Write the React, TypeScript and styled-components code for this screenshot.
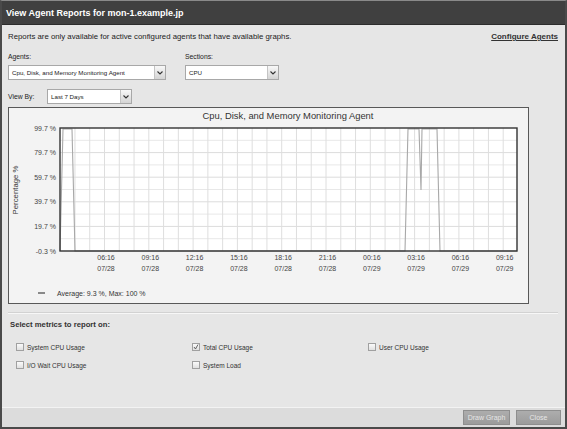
import styled, { createGlobalStyle } from "styled-components"

const GlobalStyle = createGlobalStyle`
  html, body {
    margin: 0;
    padding: 0;
    background: #e6e6e6;
  }
  body {
    font-family: "Liberation Sans", Arial, sans-serif;
  }
`

const Dialog = styled.div`
  width: 567px;
  height: 429px;
  box-sizing: border-box;
  border: 2px solid #4a4a4a;
  border-top: 1px solid #8a8a8a;
  display: flex;
  flex-direction: column;
  background: #e6e6e6;
  color: #222;
`

const TitleBar = styled.div`
  height: 23px;
  flex-shrink: 0;
  background: #404040;
  border-bottom: 1px solid #2c2c2c;
  color: #fff;
  font-weight: bold;
  font-size: 9px;
  display: flex;
  align-items: center;
  padding-left: 4px;
`

const Body = styled.div`
  flex: 1;
  padding: 6px 7px 0 6px;
  display: flex;
  flex-direction: column;
`

const InfoRow = styled.div`
  display: flex;
  justify-content: space-between;
  align-items: center;
  height: 11px;
  font-size: 7.8px;
`

const ConfigureLink = styled.a`
  font-weight: bold;
  font-size: 8px;
  color: #333;
  text-decoration: underline;
  cursor: pointer;
`

const FieldRow = styled.div`
  display: flex;
  margin-top: 10px;
`

const Field = styled.div<{ $width: number }>`
  width: ${({ $width }) => $width}px;
  display: flex;
  flex-direction: column;
`

const FieldLabel = styled.label`
  font-size: 6.8px;
  line-height: 10px;
  margin-bottom: 3px;
`

const SelectBox = styled.div<{ $width: number }>`
  width: ${({ $width }) => $width}px;
  height: 15px;
  box-sizing: border-box;
  border: 1px solid #a8a8a8;
  background: #fff;
  display: flex;
  align-items: stretch;
  font-size: 6.2px;
`

const SelectText = styled.span`
  flex: 1;
  display: flex;
  align-items: center;
  padding-left: 3px;
  white-space: nowrap;
  overflow: hidden;
`

const SelectArrow = styled.span`
  width: 10px;
  border-left: 1px solid #c4c4c4;
  background: linear-gradient(#f8f8f8, #d4d4d4);
  display: flex;
  align-items: center;
  justify-content: center;
`

const ViewByRow = styled.div`
  display: flex;
  align-items: center;
  margin-top: 9px;
`

const InlineLabel = styled.label`
  width: 39px;
  font-size: 6.8px;
`

const ChartPanel = styled.div`
  width: 521px;
  height: 197px;
  margin-top: 3px;
  box-sizing: border-box;
  border: 1px solid #585858;
  background: #f3f3f3;
  svg {
    display: block;
  }
`

const Separator = styled.div`
  margin-top: 8px;
  border-top: 1px solid #d2d2d2;
  border-bottom: 1px solid #f7f7f7;
`

const SectionTitle = styled.div`
  margin-top: 6px;
  padding-left: 2px;
  font-size: 7.7px;
  font-weight: bold;
  line-height: 10px;
  color: #333;
`

const MetricsGrid = styled.div`
  display: grid;
  grid-template-columns: 176px 176px 1fr;
  row-gap: 8px;
  margin-top: 12px;
  padding-left: 8px;
`

const Metric = styled.label`
  display: flex;
  align-items: center;
  gap: 3px;
  height: 10px;
  font-size: 6.5px;
  color: #333;
`

const Box = styled.span`
  width: 8px;
  height: 8px;
  box-sizing: border-box;
  border: 1px solid #a0a0a0;
  background: linear-gradient(#fafafa, #e0e0e0);
  display: flex;
  align-items: center;
  justify-content: center;
`

const Footer = styled.div`
  height: 19px;
  flex-shrink: 0;
  border-top: 1px solid #f3f3f3;
  background: #dcdcdc;
  display: flex;
  justify-content: flex-end;
  align-items: center;
  gap: 6px;
  padding-right: 4px;
`

const Button = styled.button<{ $width: number }>`
  width: ${({ $width }) => $width}px;
  height: 15px;
  padding: 0;
  border: 1px solid #8e8e8e;
  background: linear-gradient(#adadad, #9c9c9c);
  color: #e6e6e6;
  font-family: "Liberation Sans", Arial, sans-serif;
  font-size: 7px;
`

const Chevron = () => (
  <svg width="6" height="4" viewBox="0 0 6 4">
    <path d="M0.5 0.5 L3 3 L5.5 0.5" fill="none" stroke="#333" strokeWidth="1.1" />
  </svg>
)

const Select = ({ value, width }: { value: string; width: number }) => (
  <SelectBox $width={width}>
    <SelectText>{value}</SelectText>
    <SelectArrow>
      <Chevron />
    </SelectArrow>
  </SelectBox>
)

const Checkbox = ({ label, checked }: { label: string; checked?: boolean }) => (
  <Metric>
    <Box>
      {checked && (
        <svg width="6" height="6" viewBox="0 0 6 6">
          <path d="M1 3 L2.5 5 L5 0.5" fill="none" stroke="#555" strokeWidth="0.9" />
        </svg>
      )}
    </Box>
    {label}
  </Metric>
)

// plot frame inside the panel
const PL = 51
const PT = 20
const PR = 508
const PB = 143
const yLabels = ["99.7 %", "79.7 %", "59.7 %", "39.7 %", "19.7 %", "-0.3 %"]
const xLabels: [string, string][] = [
  ["06:16", "07/28"],
  ["09:16", "07/28"],
  ["12:16", "07/28"],
  ["15:16", "07/28"],
  ["18:16", "07/28"],
  ["21:16", "07/28"],
  ["00:16", "07/29"],
  ["03:16", "07/29"],
  ["06:16", "07/29"],
  ["09:16", "07/29"],
]
const xStep = 44.3
const x0 = 97

const dataPoints = [
  [51, 143],
  [54, 21],
  [63, 21],
  [66, 143],
  [396, 143],
  [399, 21],
  [410, 21],
  [412, 82],
  [413, 21],
  [428, 21],
  [431, 143],
  [508, 143],
]

const Chart = () => {
  const vLines: number[] = []
  for (let k = -3; k < 30; k++) {
    const x = x0 - 1.5 + (xStep / 3) * k
    if (x > PL + 2 && x < PR - 1) vLines.push(x)
  }
  const hLines: number[] = []
  for (let k = 1; k < 10; k++) hLines.push(PT + ((PB - PT) / 10) * k)

  return (
    <svg width="519" height="195" viewBox="0 0 519 195" fontFamily="Liberation Sans, Arial, sans-serif">
      <text x="279" y="11" textAnchor="middle" fontSize="9.4" fill="#333">
        Cpu, Disk, and Memory Monitoring Agent
      </text>
      <rect x={PL} y={PT} width={PR - PL} height={PB - PT} fill="#fff" />
      {hLines.map((y, i) => (
        <line key={`h${i}`} x1={PL} x2={PR} y1={y} y2={y} stroke={i % 2 ? "#dcdcdc" : "#e8e8e8"} strokeWidth="1" />
      ))}
      {vLines.map((x, i) => (
        <line key={`v${i}`} x1={x} x2={x} y1={PT} y2={PB} stroke="#dedede" strokeWidth="1" />
      ))}
      <polyline
        points={dataPoints.map(([x, y]) => `${x},${y}`).join(" ")}
        fill="none"
        stroke="#a8a8a8"
        strokeWidth="1.1"
      />
      <rect x={PL} y={PT} width={PR - PL} height={PB - PT} fill="none" stroke="#333" strokeWidth="1.4" />
      {yLabels.map((t, i) => (
        <text key={t} x="47" y={PT + ((PB - PT) / 5) * i + 2.5} textAnchor="end" fontSize="7" fill="#444">
          {t}
        </text>
      ))}
      {xLabels.map(([t, d], i) => (
        <g key={i} fontSize="7" fill="#444" textAnchor="middle">
          <text x={x0 + xStep * i} y="152">
            {t}
          </text>
          <text x={x0 + xStep * i} y="163">
            {d}
          </text>
        </g>
      ))}
      <text x="9" y="82" transform="rotate(-90 9 82)" textAnchor="middle" fontSize="7.8" fill="#333">
        Percentage %
      </text>
      <line x1="29" x2="36" y1="185" y2="185" stroke="#444" strokeWidth="1.2" />
      <text x="48" y="187.5" fontSize="7" fill="#333">
        Average: 9.3 %, Max: 100 %
      </text>
    </svg>
  )
}

const App = () => (
  <>
    <GlobalStyle />
    <Dialog>
      <TitleBar>View Agent Reports for mon-1.example.jp</TitleBar>
      <Body>
        <InfoRow>
          <span>Reports are only available for active configured agents that have available graphs.</span>
          <ConfigureLink>Configure Agents</ConfigureLink>
        </InfoRow>
        <FieldRow>
          <Field $width={177}>
            <FieldLabel>Agents:</FieldLabel>
            <Select value="Cpu, Disk, and Memory Monitoring Agent" width={158} />
          </Field>
          <Field $width={100}>
            <FieldLabel>Sections:</FieldLabel>
            <Select value="CPU" width={94} />
          </Field>
        </FieldRow>
        <ViewByRow>
          <InlineLabel>View By:</InlineLabel>
          <Select value="Last 7 Days" width={85} />
        </ViewByRow>
        <ChartPanel>
          <Chart />
        </ChartPanel>
        <Separator />
        <SectionTitle>Select metrics to report on:</SectionTitle>
        <MetricsGrid>
          <Checkbox label="System CPU Usage" />
          <Checkbox label="Total CPU Usage" checked />
          <Checkbox label="User CPU Usage" />
          <Checkbox label="I/O Wait CPU Usage" />
          <Checkbox label="System Load" />
        </MetricsGrid>
      </Body>
      <Footer>
        <Button $width={47}>Draw Graph</Button>
        <Button $width={45}>Close</Button>
      </Footer>
    </Dialog>
  </>
)

export default App
